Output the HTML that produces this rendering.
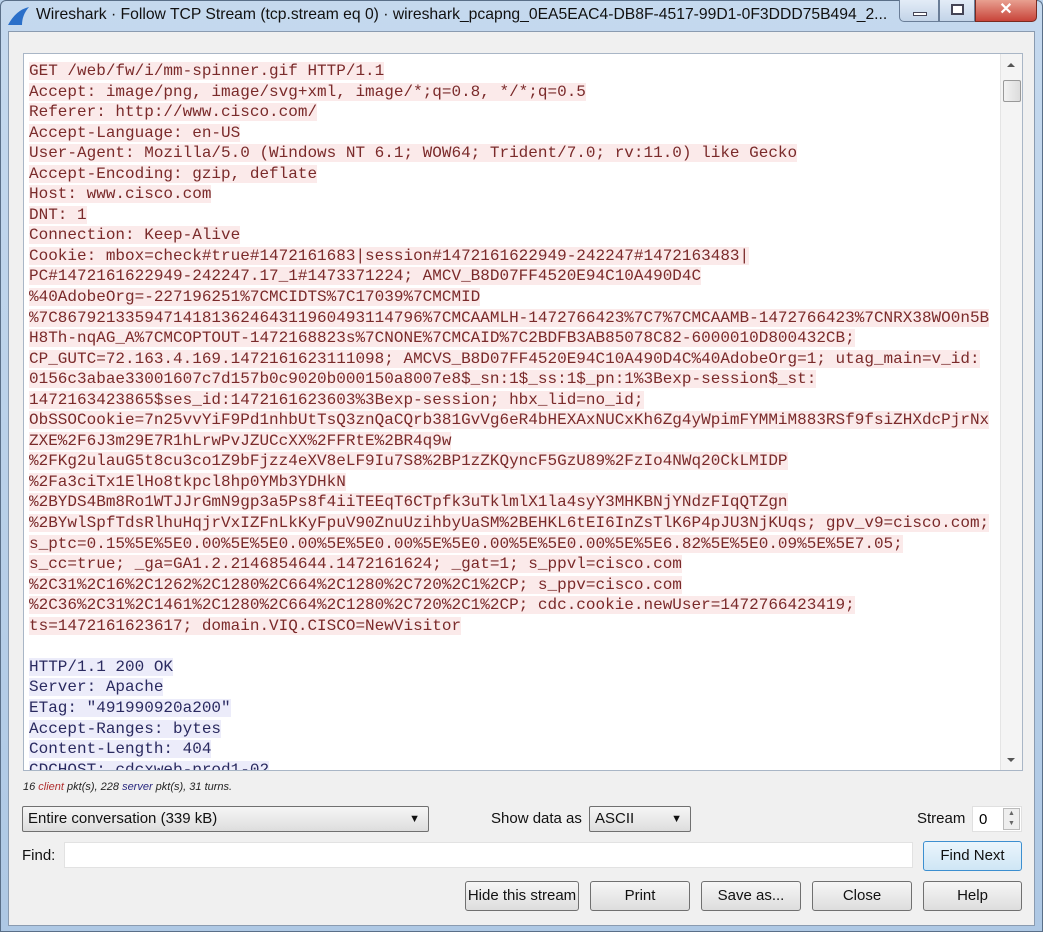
<!DOCTYPE html>
<html><head><meta charset="utf-8"><style>
*{box-sizing:border-box;margin:0;padding:0}
body{width:1043px;height:932px;overflow:hidden;background:#b9d1ea;font-family:"Liberation Sans",sans-serif;position:relative}
.frame{position:absolute;left:0;top:0;width:1043px;height:932px;background:linear-gradient(#c5d9ee,#aec8e4);border:1px solid #5a6f88;border-radius:6px 6px 0 0}
.title{position:absolute;left:36px;top:6px;font-size:15.7px;color:#111;white-space:nowrap}
.body{position:absolute;left:8px;top:31px;width:1027px;height:895px;background:#f0f0f0;border:1px solid #8a9bb0}
.ta{position:absolute;left:23px;top:53px;width:1000px;height:718px;background:#fff;border:1px solid #a9b6c6;overflow:hidden}
.txt{position:absolute;left:5px;top:7px;font-family:"Liberation Mono",monospace;font-size:16px;line-height:20.55px;white-space:pre}
.r span{background:#fbeaea;color:#7a2a2a}
.b span{background:#ececfa;color:#2a2a60}
.sb{position:absolute;right:0;top:0;width:22px;height:716px;background:#f4f4f4;border-left:1px solid #e4e4e4}
.btn{position:absolute;height:30px;border:1px solid #707070;border-radius:3px;background:linear-gradient(#f6f6f6,#dddddd);font-size:15px;text-align:center;line-height:28px;color:#111}
.lbl{position:absolute;font-size:15px;color:#111}
</style></head><body>
<div class="frame"></div>
<svg style="position:absolute;left:6px;top:6px" width="24" height="20"><path d="M2 19 Q10 4 23 1 Q16 9 16 19 Z" fill="#2a6fc9"/></svg>
<div class="title">Wireshark · Follow TCP Stream (tcp.stream eq 0) · wireshark_pcapng_0EA5EAC4-DB8F-4517-99D1-0F3DDD75B494_2...</div>
<div style="position:absolute;left:899px;top:0;width:40px;height:22px;border:1px solid #6a7e98;border-top:none;border-radius:0 0 0 5px;background:linear-gradient(#e3ecf7,#c3d4e8)"><div style="position:absolute;left:13px;top:12px;width:14px;height:4px;background:#fff;border:1px solid #445"></div></div>
<div style="position:absolute;left:939px;top:0;width:36px;height:22px;border:1px solid #6a7e98;border-top:none;background:linear-gradient(#e3ecf7,#c3d4e8)"><div style="position:absolute;left:11px;top:4px;width:13px;height:11px;border:2px solid #445;background:#fff"></div></div>
<div style="position:absolute;left:975px;top:0;width:62px;height:22px;border:1px solid #7a2a20;border-top:none;border-radius:0 0 5px 0;background:linear-gradient(#e8a090,#c8443a);color:#fff;font-weight:bold;font-size:16px;text-align:center;line-height:20px">✕</div>
<div class="body"></div>
<div class="ta">
<div class="txt"><div class="r"><span>GET /web/fw/i/mm-spinner.gif HTTP/1.1</span>
<span>Accept: image/png, image/svg+xml, image/*;q=0.8, */*;q=0.5</span>
<span>Referer: http://www.cisco.com/</span>
<span>Accept-Language: en-US</span>
<span>User-Agent: Mozilla/5.0 (Windows NT 6.1; WOW64; Trident/7.0; rv:11.0) like Gecko</span>
<span>Accept-Encoding: gzip, deflate</span>
<span>Host: www.cisco.com</span>
<span>DNT: 1</span>
<span>Connection: Keep-Alive</span>
<span>Cookie: mbox=check#true#1472161683|session#1472161622949-242247#1472163483|</span>
<span>PC#1472161622949-242247.17_1#1473371224; AMCV_B8D07FF4520E94C10A490D4C</span>
<span>%40AdobeOrg=-227196251%7CMCIDTS%7C17039%7CMCMID</span>
<span>%7C86792133594714181362464311960493114796%7CMCAAMLH-1472766423%7C7%7CMCAAMB-1472766423%7CNRX38WO0n5B</span>
<span>H8Th-nqAG_A%7CMCOPTOUT-1472168823s%7CNONE%7CMCAID%7C2BDFB3AB85078C82-6000010D800432CB;</span>
<span>CP_GUTC=72.163.4.169.1472161623111098; AMCVS_B8D07FF4520E94C10A490D4C%40AdobeOrg=1; utag_main=v_id:</span>
<span>0156c3abae33001607c7d157b0c9020b000150a8007e8$_sn:1$_ss:1$_pn:1%3Bexp-session$_st:</span>
<span>1472163423865$ses_id:1472161623603%3Bexp-session; hbx_lid=no_id;</span>
<span>ObSSOCookie=7n25vvYiF9Pd1nhbUtTsQ3znQaCQrb381GvVg6eR4bHEXAxNUCxKh6Zg4yWpimFYMMiM883RSf9fsiZHXdcPjrNx</span>
<span>ZXE%2F6J3m29E7R1hLrwPvJZUCcXX%2FFRtE%2BR4q9w</span>
<span>%2FKg2ulauG5t8cu3co1Z9bFjzz4eXV8eLF9Iu7S8%2BP1zZKQyncF5GzU89%2FzIo4NWq20CkLMIDP</span>
<span>%2Fa3ciTx1ElHo8tkpcl8hp0YMb3YDHkN</span>
<span>%2BYDS4Bm8Ro1WTJJrGmN9gp3a5Ps8f4iiTEEqT6CTpfk3uTklmlX1la4syY3MHKBNjYNdzFIqQTZgn</span>
<span>%2BYwlSpfTdsRlhuHqjrVxIZFnLkKyFpuV90ZnuUzihbyUaSM%2BEHKL6tEI6InZsTlK6P4pJU3NjKUqs; gpv_v9=cisco.com;</span>
<span>s_ptc=0.15%5E%5E0.00%5E%5E0.00%5E%5E0.00%5E%5E0.00%5E%5E0.00%5E%5E6.82%5E%5E0.09%5E%5E7.05;</span>
<span>s_cc=true; _ga=GA1.2.2146854644.1472161624; _gat=1; s_ppvl=cisco.com</span>
<span>%2C31%2C16%2C1262%2C1280%2C664%2C1280%2C720%2C1%2CP; s_ppv=cisco.com</span>
<span>%2C36%2C31%2C1461%2C1280%2C664%2C1280%2C720%2C1%2CP; cdc.cookie.newUser=1472766423419;</span>
<span>ts=1472161623617; domain.VIQ.CISCO=NewVisitor</span>
</div>
<div class="b"><span>HTTP/1.1 200 OK</span>
<span>Server: Apache</span>
<span>ETag: "491990920a200"</span>
<span>Accept-Ranges: bytes</span>
<span>Content-Length: 404</span>
<span>CDCHOST: cdcxweb-prod1-02</span></div></div>
<div class="sb"><div style="position:absolute;left:6px;top:9px;width:0;height:0;border:4px solid transparent;border-bottom:4px solid #555;border-top:none"></div>
<div style="position:absolute;left:2px;top:26px;width:18px;height:22px;border:1px solid #999;border-radius:2px;background:linear-gradient(90deg,#f2f2f2,#dcdcdc)"></div>
<div style="position:absolute;left:6px;top:704px;width:0;height:0;border:4px solid transparent;border-top:4px solid #555;border-bottom:none"></div></div>
</div>
<div style="position:absolute;left:23px;top:781px;font-size:11px;font-style:italic;color:#222">16 <span style="color:#b03030">client</span> pkt(s), 228 <span style="color:#2a2a80">server</span> pkt(s), 31 turns.</div>
<div class="btn" style="left:22px;top:806px;width:407px;height:26px;line-height:24px;text-align:left;padding-left:5px;border-radius:2px">Entire conversation (339 kB)<span style="position:absolute;right:8px;top:0;font-size:11px">▼</span></div>
<div class="lbl" style="left:491px;top:810px">Show data as</div>
<div class="btn" style="left:589px;top:806px;width:102px;height:26px;line-height:24px;text-align:left;padding-left:5px;border-radius:2px">ASCII<span style="position:absolute;right:8px;top:0;font-size:11px">▼</span></div>
<div class="lbl" style="left:917px;top:810px">Stream</div>
<div style="position:absolute;left:972px;top:806px;width:50px;height:26px;background:#fff;border:1px solid #e0e0e0;font-size:15px;padding:4px 0 0 6px">0<div style="position:absolute;right:1px;top:1px;width:17px;height:22px;border:1px solid #bbb;background:#eee;font-size:7px;line-height:10px;text-align:center;color:#666">▲<br>▼</div></div>
<div class="lbl" style="left:22px;top:847px">Find:</div>
<div style="position:absolute;left:64px;top:842px;width:849px;height:26px;background:#fff;border:1px solid #e2e2e2"></div>
<div class="btn" style="left:923px;top:841px;width:99px;border-color:#3c8fd0;background:linear-gradient(#eaf5fc,#cfe6f5)">Find Next</div>
<div class="btn" style="left:465px;top:881px;width:114px">Hide this stream</div>
<div class="btn" style="left:590px;top:881px;width:100px">Print</div>
<div class="btn" style="left:701px;top:881px;width:100px">Save as...</div>
<div class="btn" style="left:812px;top:881px;width:100px">Close</div>
<div class="btn" style="left:923px;top:881px;width:99px">Help</div>
</body></html>
